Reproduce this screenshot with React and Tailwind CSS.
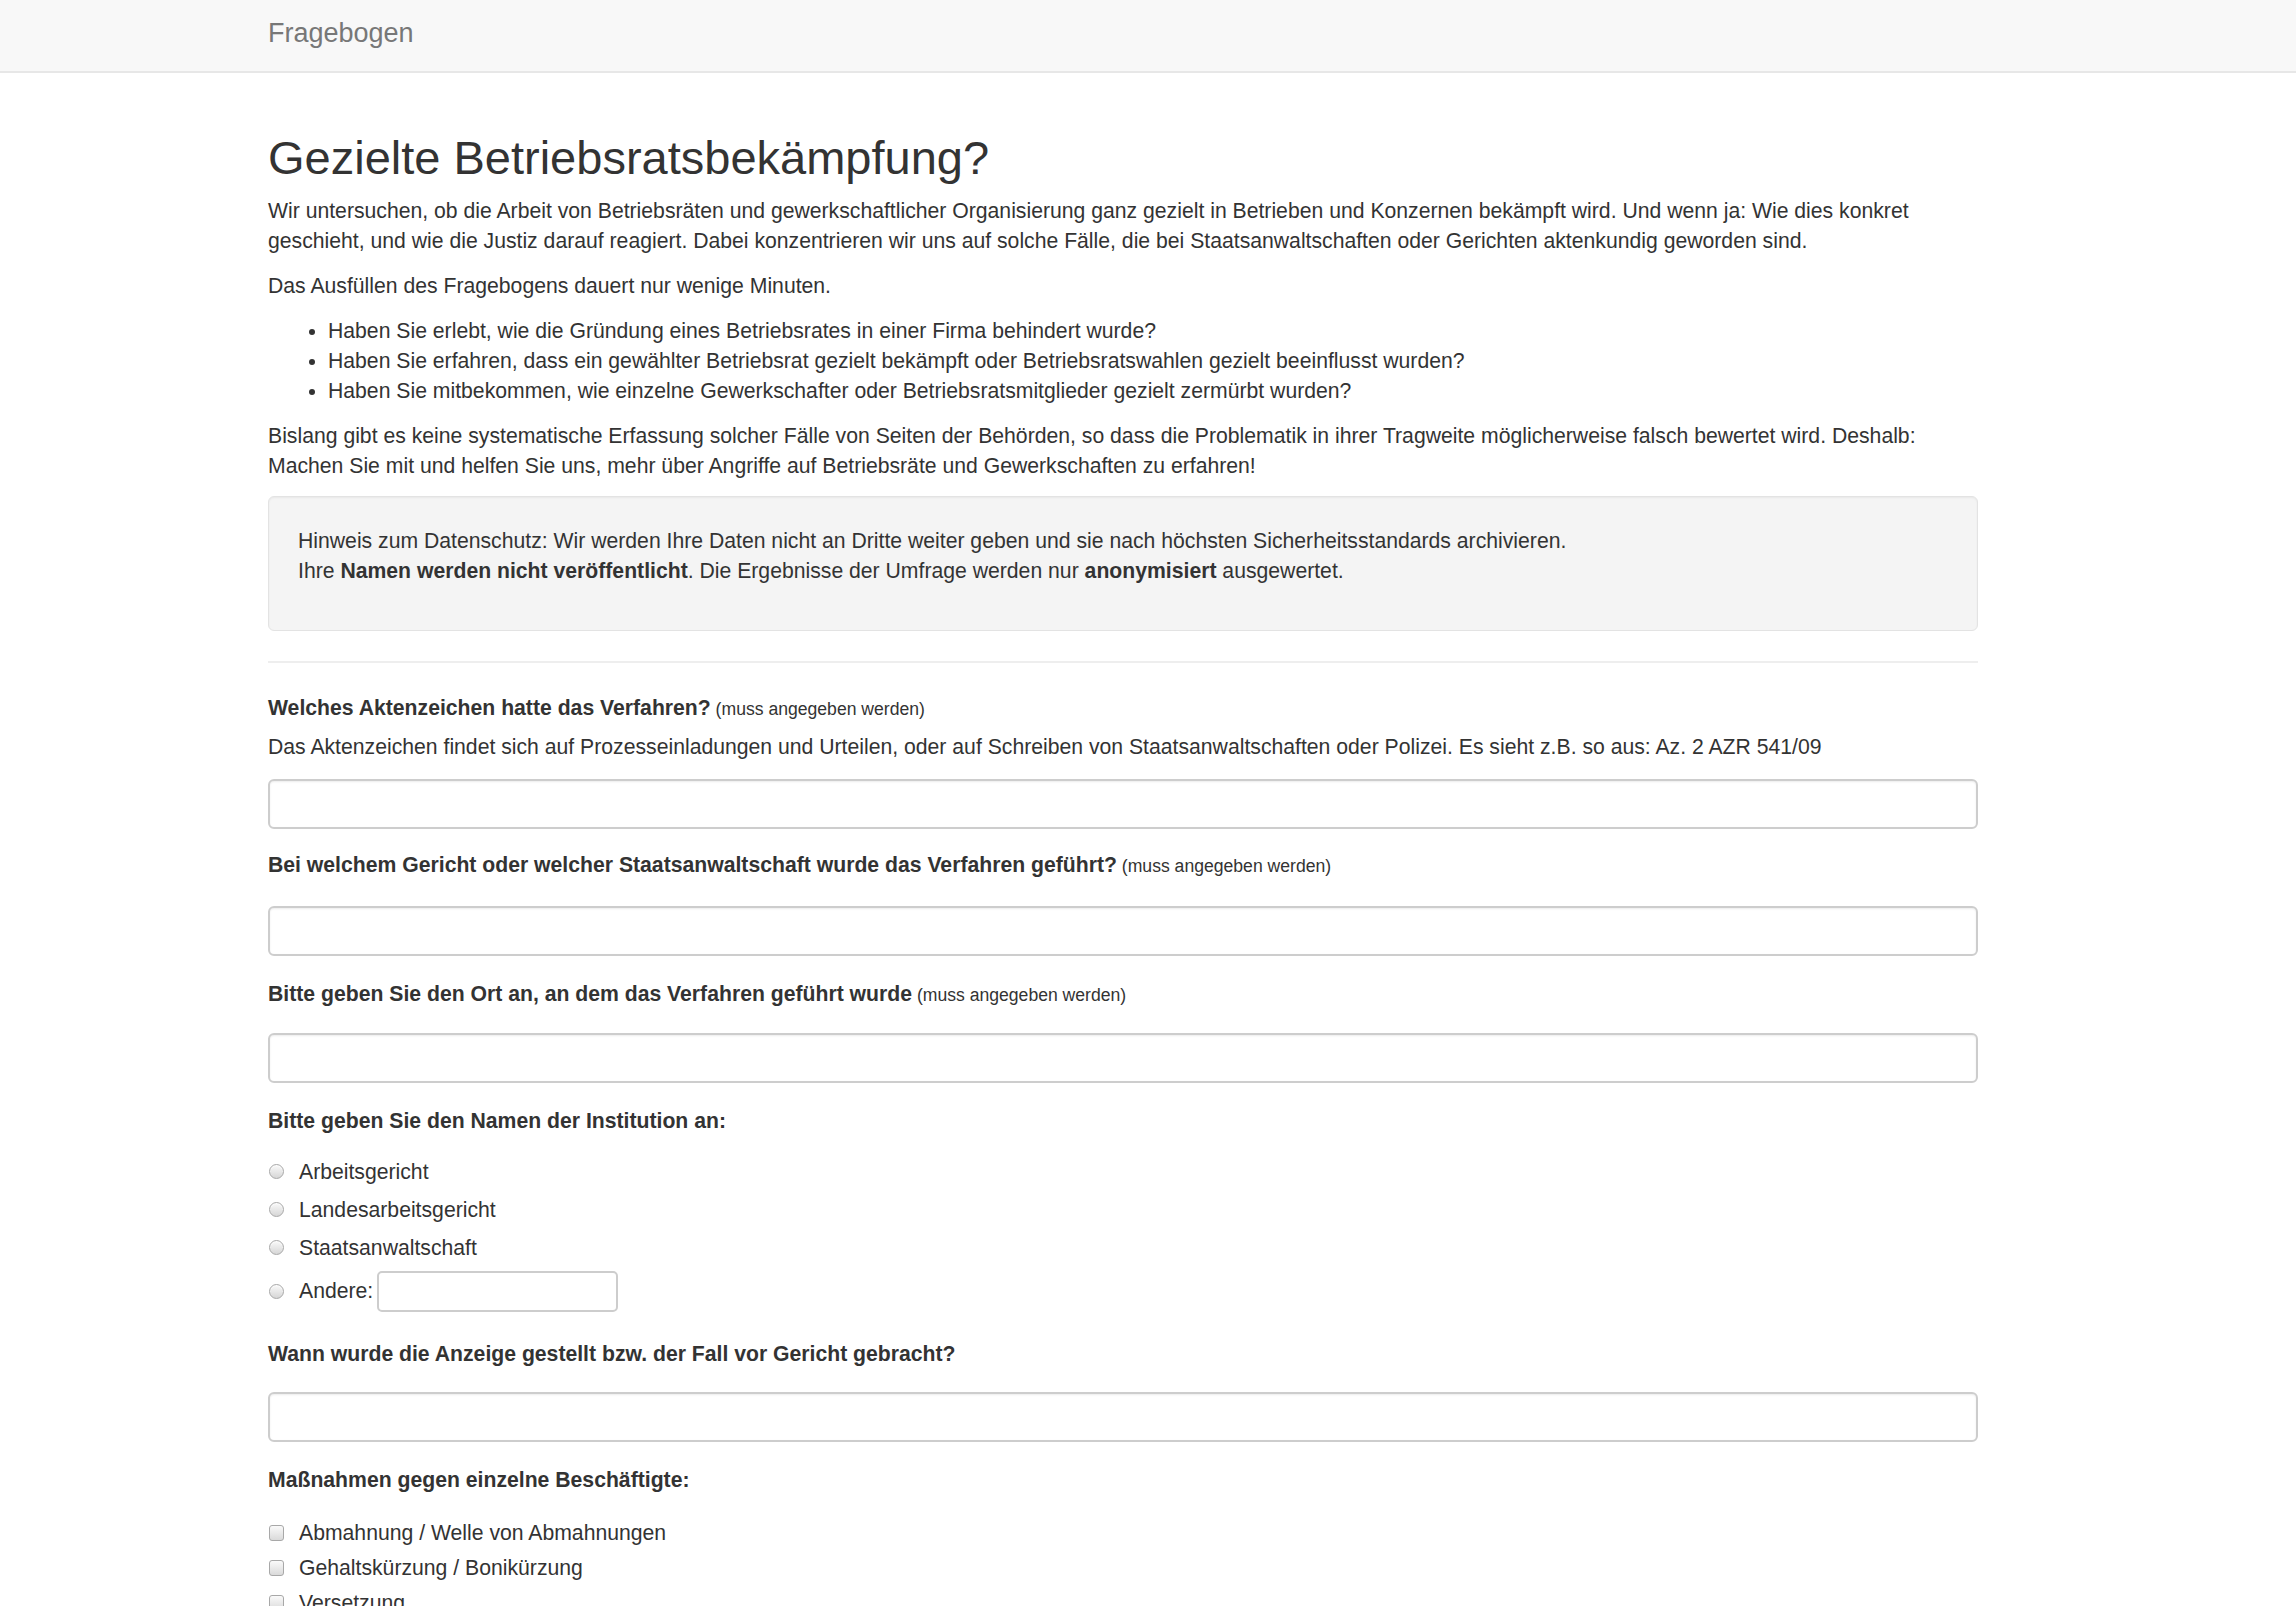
import React from 'react';

const radioOptions = ['Arbeitsgericht', 'Landesarbeitsgericht', 'Staatsanwaltschaft'];

const measures = [
  'Abmahnung / Welle von Abmahnungen',
  'Gehaltskürzung / Bonikürzung',
  'Versetzung',
  'Kündigung',
  'Überwachung',
];

function Required() {
  return <span className="text-[17.6px] font-normal"> (muss angegeben werden)</span>;
}

function TextInput({ className = '' }) {
  return (
    <input
      type="text"
      className={`block w-full h-[50px] border-2 border-[#cdcdcd] rounded-[6px] bg-white px-[18px] shadow-[inset_0_1px_2px_rgba(0,0,0,0.08)] outline-none ${className}`}
    />
  );
}

function Radio({ name }) {
  return (
    <input
      type="radio"
      name={name}
      className="appearance-none w-[15px] h-[15px] rounded-full border border-[#a8a8a8] bg-gradient-to-b from-[#fafafa] to-[#d6d6d6] shadow-[inset_0_1px_1px_rgba(255,255,255,0.8)] shrink-0"
    />
  );
}

function Checkbox() {
  return (
    <input
      type="checkbox"
      className="appearance-none w-[15px] h-[16px] rounded-[3px] border border-[#a8a8a8] bg-gradient-to-b from-[#fafafa] to-[#dadada] shrink-0"
    />
  );
}

export default function App() {
  return (
    <div className="min-h-screen bg-white text-[#333] font-['Liberation_Sans',Arial,sans-serif] text-[21.2px] leading-[30px]">
      {/* Navbar */}
      <div className="h-[73px] bg-[#f8f8f8] border-b-2 border-[#e7e7e7]">
        <div className="pl-[268px] pt-[18px]">
          <span className="text-[27px] leading-[30px] text-[#777]">Fragebogen</span>
        </div>
      </div>

      {/* Content */}
      <div className="pl-[268px] pt-[60px] pb-[80px]">
        <div className="w-[1710px]">
          <h1 className="text-[47px] leading-[49.5px] font-normal mb-[13.5px]">Gezielte Betriebsratsbekämpfung?</h1>
          <p className="mb-[15px]">
            Wir untersuchen, ob die Arbeit von Betriebsräten und gewerkschaftlicher Organisierung ganz gezielt in Betrieben und Konzernen bekämpft wird. Und wenn ja: Wie dies konkret geschieht, und wie die Justiz darauf reagiert. Dabei konzentrieren wir uns auf solche Fälle, die bei Staatsanwaltschaften oder Gerichten aktenkundig geworden sind.
          </p>
          <p className="mb-[15px]">Das Ausfüllen des Fragebogens dauert nur wenige Minuten.</p>
          <ul className="list-disc pl-[60px] mb-[15px]">
            <li>Haben Sie erlebt, wie die Gründung eines Betriebsrates in einer Firma behindert wurde?</li>
            <li>Haben Sie erfahren, dass ein gewählter Betriebsrat gezielt bekämpft oder Betriebsratswahlen gezielt beeinflusst wurden?</li>
            <li>Haben Sie mitbekommen, wie einzelne Gewerkschafter oder Betriebsratsmitglieder gezielt zermürbt wurden?</li>
          </ul>
          <p className="mb-[15px]">
            Bislang gibt es keine systematische Erfassung solcher Fälle von Seiten der Behörden, so dass die Problematik in ihrer Tragweite möglicherweise falsch bewertet wird. Deshalb: Machen Sie mit und helfen Sie uns, mehr über Angriffe auf Betriebsräte und Gewerkschaften zu erfahren!
          </p>

          <div className="bg-[#f4f4f4] border border-[#e3e3e3] rounded-[6px] p-[29px] shadow-[inset_0_1px_2px_rgba(0,0,0,0.05)]">
            <p className="mb-[15px]">
              Hinweis zum Datenschutz: Wir werden Ihre Daten nicht an Dritte weiter geben und sie nach höchsten Sicherheitsstandards archivieren.
              <br />
              Ihre <b>Namen werden nicht veröffentlicht</b>. Die Ergebnisse der Umfrage werden nur <b>anonymisiert</b> ausgewertet.
            </p>
          </div>

          <hr className="mt-[30px] mb-[30px] border-0 border-t-2 border-[#eeeeee]" />

          <form>
            <div className="mb-[21px]">
              <label className="block font-bold mb-[7.5px]">
                Welches Aktenzeichen hatte das Verfahren?<Required />
              </label>
              <p className="mb-[17px]">
                Das Aktenzeichen findet sich auf Prozesseinladungen und Urteilen, oder auf Schreiben von Staatsanwaltschaften oder Polizei. Es sieht z.B. so aus: Az. 2 AZR 541/09
              </p>
              <TextInput />
            </div>

            <div className="mb-[23px]">
              <label className="block font-bold mb-[25px]">
                Bei welchem Gericht oder welcher Staatsanwaltschaft wurde das Verfahren geführt?<Required />
              </label>
              <TextInput />
            </div>

            <div className="mb-[23px]">
              <label className="block font-bold mb-[23px]">
                Bitte geben Sie den Ort an, an dem das Verfahren geführt wurde<Required />
              </label>
              <TextInput />
            </div>

            <div className="mb-[27px]">
              <label className="block font-bold mb-[21px]">Bitte geben Sie den Namen der Institution an:</label>
              <div className="flex flex-col gap-[8px]">
                {radioOptions.map((opt) => (
                  <label key={opt} className="flex items-center h-[30px] pl-[1px]">
                    <Radio name="institution" />
                    <span className="ml-[15px]">{opt}</span>
                  </label>
                ))}
                <label className="flex items-center h-[41px] pl-[1px]">
                  <Radio name="institution" />
                  <span className="ml-[15px]">Andere:</span>
                  <input
                    type="text"
                    className="ml-[4px] w-[241px] h-[41px] border-2 border-[#cdcdcd] rounded-[5px] bg-white outline-none"
                  />
                </label>
              </div>
            </div>

            <div className="mb-[23px]">
              <label className="block font-bold mb-[23px]">Wann wurde die Anzeige gestellt bzw. der Fall vor Gericht gebracht?</label>
              <TextInput />
            </div>

            <div>
              <label className="block font-bold mb-[23px]">Maßnahmen gegen einzelne Beschäftigte:</label>
              <div className="flex flex-col gap-[5px]">
                {measures.map((m) => (
                  <label key={m} className="flex items-center h-[30px] pl-[1px]">
                    <Checkbox />
                    <span className="ml-[15px]">{m}</span>
                  </label>
                ))}
              </div>
            </div>
          </form>
        </div>
      </div>
    </div>
  );
}
